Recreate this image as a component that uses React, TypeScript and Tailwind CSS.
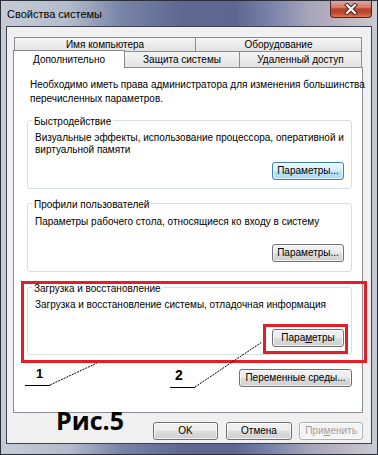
import React from "react";

type BtnProps = {
  children: React.ReactNode;
  className?: string;
  variant?: "normal" | "focus" | "disabled";
};

function Btn({ children, className = "", variant = "normal" }: BtnProps) {
  const v =
    variant === "focus"
      ? "border-[#3c7fb1] bg-[linear-gradient(#eaf6fd_0%,#d9f0fc_49%,#bee6fd_50%,#a7d9f5_100%)] text-black"
      : variant === "disabled"
      ? "border-[#adb2b5] bg-[#f4f4f4] text-[#a0a0a0]"
      : "border-[#707070] bg-[linear-gradient(#f2f2f2_0%,#ebebeb_49%,#dddddd_50%,#cfcfcf_100%)] text-black";
  return (
    <div
      className={`h-[18px] rounded-[3px] border shadow-[inset_0_0_0_1px_rgba(255,255,255,0.7)] flex items-center justify-center text-[10px] leading-none whitespace-nowrap ${v} ${className}`}
    >
      {children}
    </div>
  );
}

type GroupProps = {
  label: string;
  height: string;
  padTop: string;
  btnTop: string;
  lines: string[];
  button: React.ReactNode;
  variant?: "normal" | "focus";
  mt: string;
};

function Group({ label, height, padTop, btnTop, lines, button, variant = "normal", mt }: GroupProps) {
  return (
    <div className={`relative w-[325px] ${height} ${mt} ${padTop} rounded-[3px] border border-[#d5dfe5] flex flex-col`}>
      <div className="absolute top-[-5px] left-[4px] bg-white px-[2px] text-[10px] leading-[12px] whitespace-nowrap">
        {label}
      </div>
      <div className="pl-[7px] text-[10px] leading-[12px]">
        {lines.map((l, i) => (
          <div key={i} className="whitespace-nowrap">
            {l}
          </div>
        ))}
      </div>
      <div className={`flex justify-end pr-[7px] ${btnTop}`}>
        <Btn variant={variant} className="w-[72px]">
          {button}
        </Btn>
      </div>
    </div>
  );
}

export default function App() {
  return (
    <div className="relative w-[378px] h-[455px] overflow-hidden border border-[#2b303b] bg-[linear-gradient(90deg,#c6ccd6_0%,#b3bccb_18%,#7884a6_32%,#5e6891_48%,#5c6690_62%,#7a84a8_72%,#a7a5ba_82%,#bab3c0_90%,#c8cbd3_100%)] font-['Liberation_Sans',Arial,sans-serif] text-black">
      {/* title bar */}
      <div className="h-[25px] flex items-start justify-between">
        <div className="pl-[6px] pt-[7px] text-[11px] leading-[13px] whitespace-nowrap">Свойства системы</div>
        <div className="mr-[5px] w-[42px] h-[17px] rounded-b-[4px] border border-t-0 border-[#4e2622] bg-[linear-gradient(#e3a696_0%,#d27a68_40%,#b6402a_50%,#c04a2e_75%,#e07b52_100%)] flex items-center justify-center">
          <svg width="14" height="12" viewBox="0 0 14 12">
            <path d="M3 2 L11 10 M11 2 L3 10" stroke="#3a2020" strokeWidth="4" strokeLinecap="square" />
            <path d="M3 2 L11 10 M11 2 L3 10" stroke="#ffffff" strokeWidth="2.2" strokeLinecap="square" />
          </svg>
        </div>
      </div>

      {/* client area */}
      <div className="mx-[5px] h-[418px] border border-[#3b4150] bg-[#f0f0f0] pt-[10px] pl-[6px]">
        {/* tabs row 1 */}
        <div className="ml-[1px] flex h-[13px]">
          <div className="w-[182px] h-[14px] border border-b-0 border-[#898c95] bg-[linear-gradient(#f4f4f4,#e3e3e3)] flex items-center justify-center text-[10px] leading-none">
            Имя компьютера
          </div>
          <div className="w-[166px] h-[14px] border border-b-0 border-l-0 border-[#898c95] bg-[linear-gradient(#f4f4f4,#e3e3e3)] flex items-center justify-center text-[10px] leading-none">
            Оборудование
          </div>
        </div>
        {/* tabs row 2 */}
        <div className="flex items-end h-[17px]">
          <div className="relative z-10 w-[112px] h-[18px] -mb-px border border-b-0 border-[#898c95] bg-white flex items-start justify-center pt-[3px] text-[10px] leading-[12px]">
            Дополнительно
          </div>
          <div className="w-[115px] h-[16px] border border-b-0 border-l-0 border-[#898c95] bg-[linear-gradient(#f4f4f4,#e3e3e3)] flex items-center justify-center text-[10px] leading-none">
            Защита системы
          </div>
          <div className="w-[122px] h-[16px] border border-b-0 border-l-0 border-[#898c95] bg-[linear-gradient(#f4f4f4,#e3e3e3)] flex items-center justify-center text-[10px] leading-none">
            Удаленный доступ
          </div>
        </div>
        {/* panel */}
        <div className="w-[350px] h-[346px] bg-white border border-[#898c95] pl-[13px] pt-[10px]">
          <div className="w-[325px] flex flex-col">
            <div className="ml-[3px] text-[10px] leading-[14px]">
              <div className="whitespace-nowrap">Необходимо иметь права администратора для изменения большинства</div>
              <div className="whitespace-nowrap">перечисленных параметров.</div>
            </div>
            <Group
              mt="mt-[14px]"
              label="Быстродействие"
              height="h-[69px]"
              padTop="pt-[11px]"
              btnTop="mt-[6px]"
              variant="focus"
              lines={["Визуальные эффекты, использование процессора, оперативной и", "виртуальной памяти"]}
              button="Параметры..."
            />
            <Group
              mt="mt-[14px]"
              label="Профили пользователей"
              height="h-[69px]"
              padTop="pt-[12px]"
              btnTop="mt-[16px]"
              lines={["Параметры рабочего стола, относящиеся ко входу в систему"]}
              button="Параметры..."
            />
            <Group
              mt="mt-[15px]"
              label="Загрузка и восстановление"
              height="h-[68px]"
              padTop="pt-[11px]"
              btnTop="mt-[18px]"
              lines={["Загрузка и восстановление системы, отладочная информация"]}
              button={
                <span>
                  Пара<span className="underline">м</span>етры
                </span>
              }
            />
            <div className="mt-[14px] flex justify-end">
              <Btn className="w-[113px]">Переменные среды...</Btn>
            </div>
          </div>
        </div>
        {/* bottom buttons */}
        <div className="w-[350px] mt-[9px] flex justify-end">
          <Btn className="w-[65px]">OK</Btn>
          <Btn className="w-[66px] ml-[8px]">Отмена</Btn>
          <Btn variant="disabled" className="w-[64px] ml-[7px]">
            <span>
              При<span className="underline">м</span>енить
            </span>
          </Btn>
        </div>
      </div>

      {/* annotations overlay */}
      <div className="absolute -left-px -top-px w-[378px] h-[455px] pointer-events-none">
        <div className="absolute left-[21px] top-[281px] w-[346px] h-[82px] border-[3px] border-[#e41e26]" />
        <div className="absolute left-[263px] top-[324px] w-[85px] h-[30px] border-[3px] border-[#e41e26]" />
        <svg className="absolute left-0 top-0" width="378" height="455" viewBox="0 0 378 455">
          <line x1="25" y1="385.5" x2="50" y2="385.5" stroke="#000" strokeWidth="1" />
          <line x1="50" y1="385" x2="97" y2="363" stroke="#000" strokeWidth="1" strokeDasharray="2 1" />
          <line x1="170" y1="387.5" x2="195" y2="387.5" stroke="#000" strokeWidth="1" />
          <line x1="195" y1="387" x2="262" y2="342" stroke="#000" strokeWidth="1" strokeDasharray="2 1" />
        </svg>
        <div className="absolute left-[36px] top-[367px] text-[13px] leading-[13px] font-bold font-['Liberation_Sans',Arial,sans-serif]">1</div>
        <div className="absolute left-[175px] top-[368px] text-[14px] leading-[14px] font-bold font-['Liberation_Sans',Arial,sans-serif]">2</div>
        <div className="absolute left-[56px] top-[408px] text-[25px] leading-[25px] font-bold font-['Open_Sans',sans-serif]">Рис.5</div>
      </div>
    </div>
  );
}
